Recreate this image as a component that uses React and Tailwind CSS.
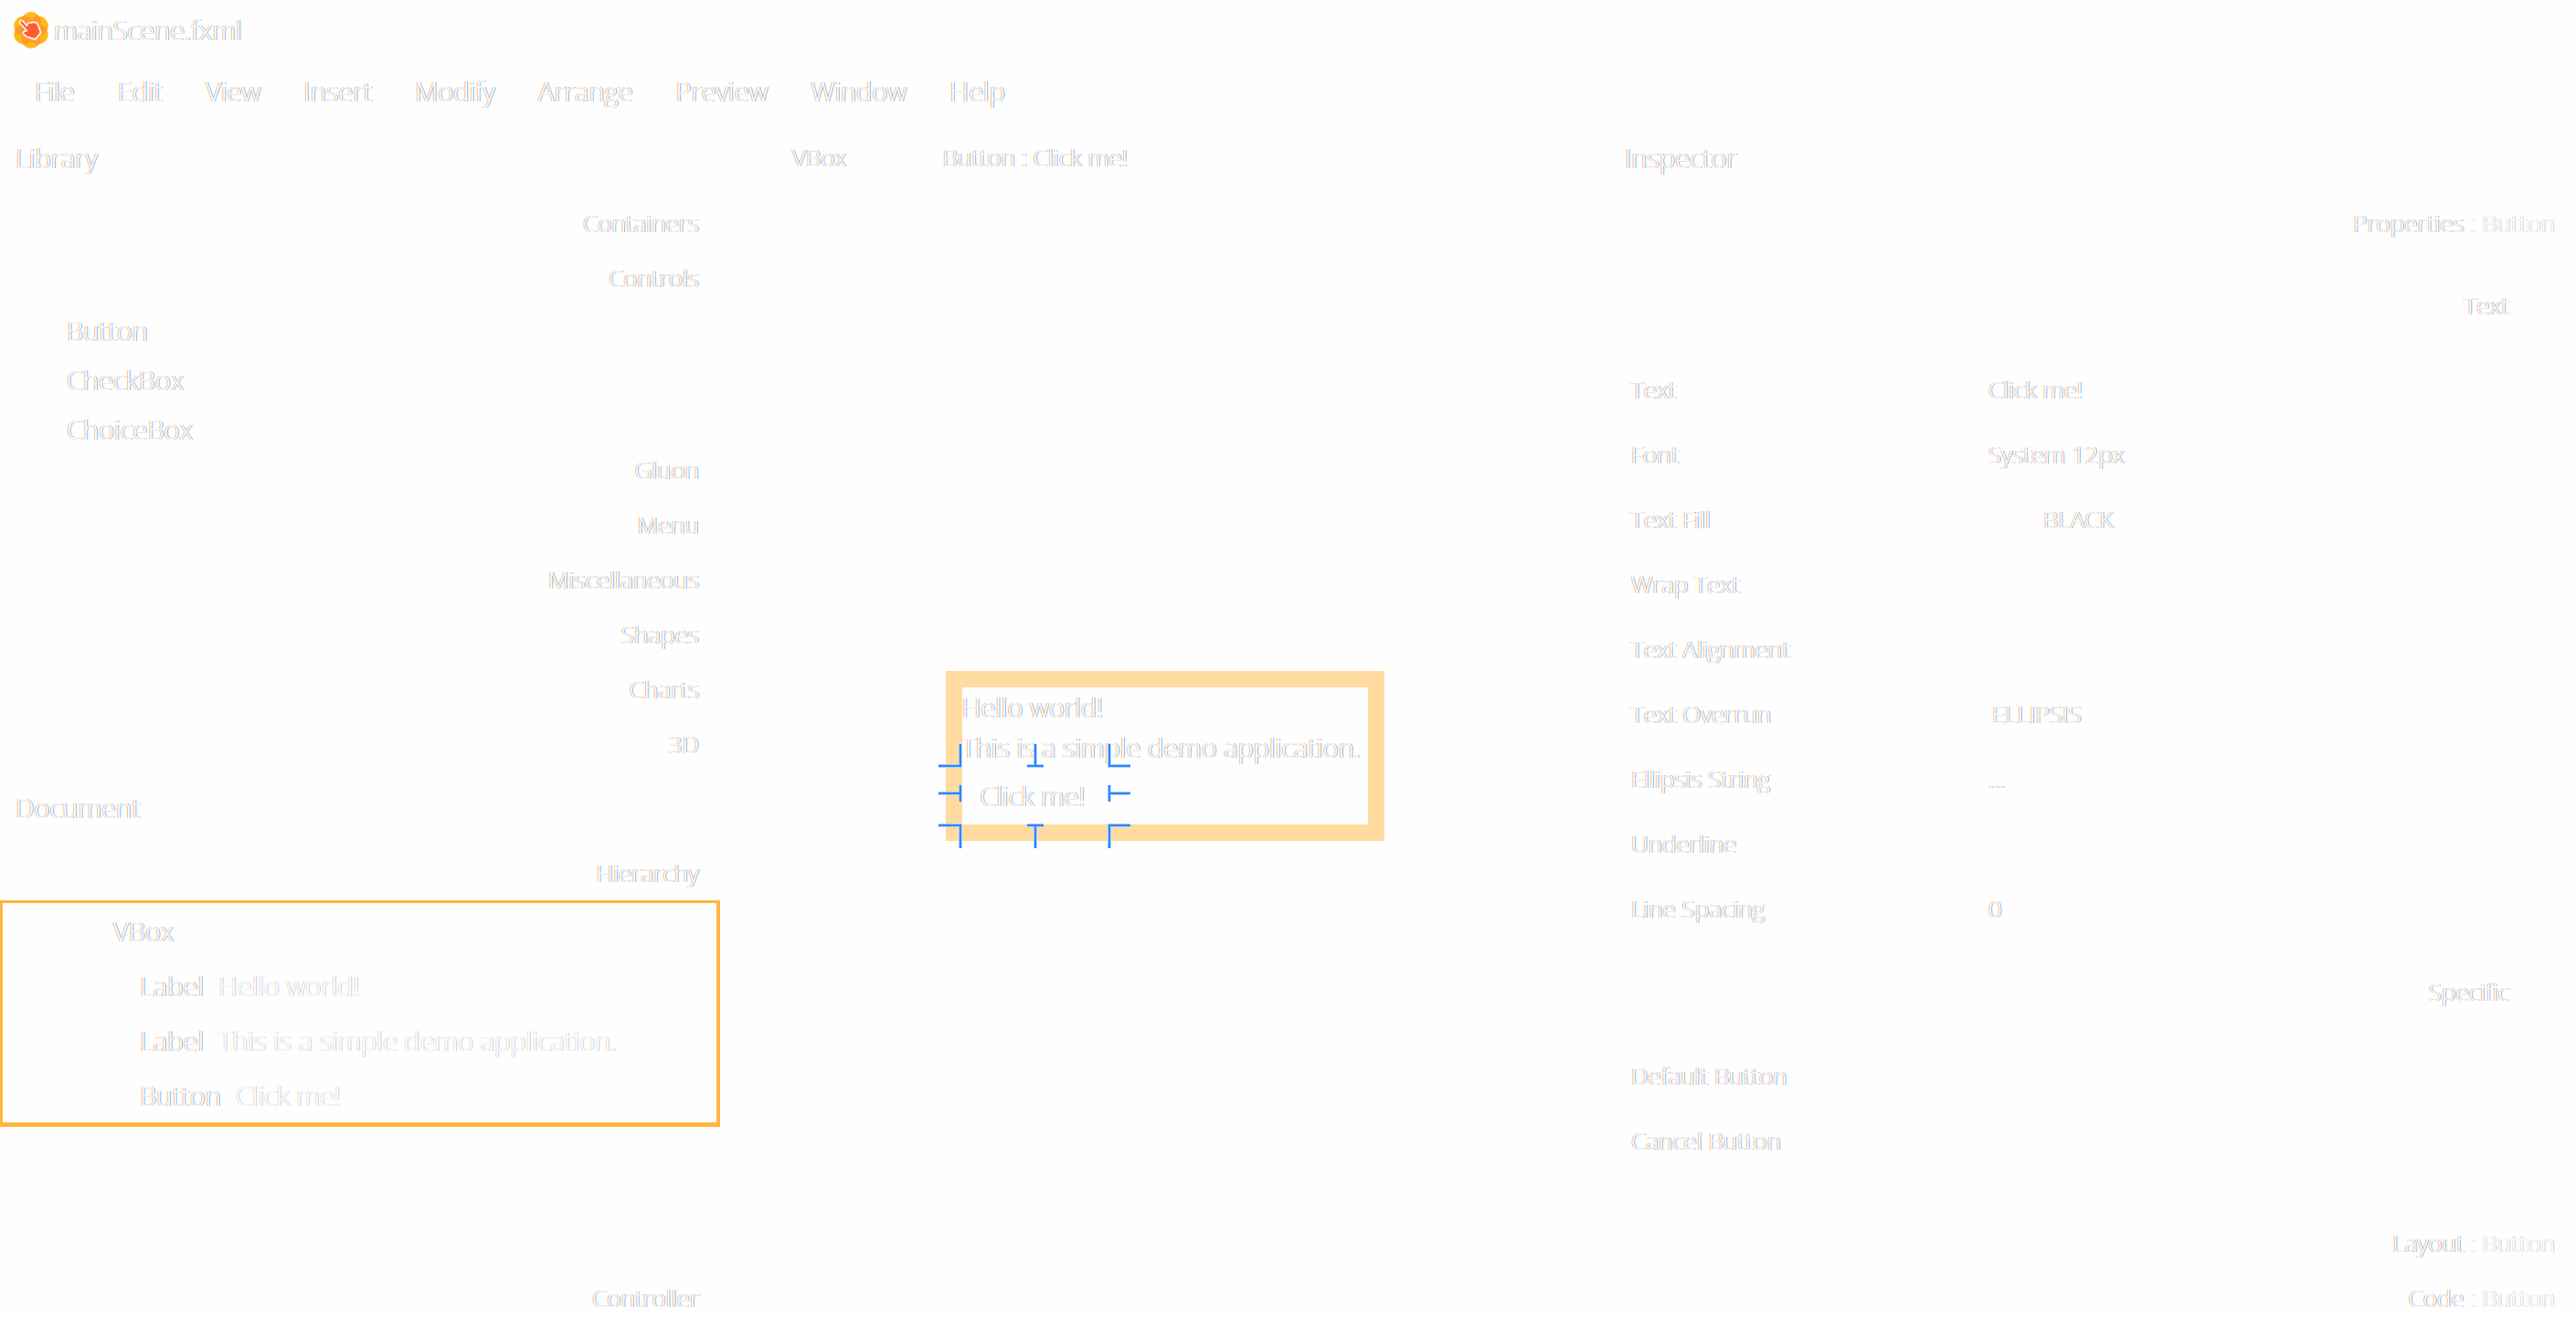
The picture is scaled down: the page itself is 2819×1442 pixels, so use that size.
const fringe =
  "text-[#fefefe] [text-shadow:-1px_0_0_#ffb874,1px_0_0_#74b8ff]";
const paleFringe =
  "text-[#fefefe] [text-shadow:-1px_0_0_#ffdab4,1px_0_0_#aed4ff]";

const menus = ["File", "Edit", "View", "Insert", "Modify", "Arrange", "Preview", "Window", "Help"];
const controls = ["Button", "CheckBox", "ChoiceBox"];
const lowerSections = ["Gluon", "Menu", "Miscellaneous", "Shapes", "Charts", "3D"];
const tree = [
  { type: "Label", text: "Hello world!" },
  { type: "Label", text: "This is a simple demo application." },
  { type: "Button", text: "Click me!" },
];

function Logo() {
  const petals = [0, 60, 120, 180, 240, 300];
  return (
    <svg className="h-10 w-10 shrink-0" viewBox="0 0 40 40" aria-hidden="true">
      {petals.map((a) => (
        <circle key={a} cx="20" cy="10.500" r="10.500" fill="#ffb81c" transform={`rotate(${a} 20 20)`} />
      ))}
      {petals.map((a) => (
        <ellipse key={a} cx="20" cy="12" rx="5.800" ry="9.500" fill="#ff9a2c" transform={`rotate(${a + 30} 20 20)`} />
      ))}
      <circle cx="20" cy="20" r="10" fill="#ff8a30" />
      <path
        d="M7.800 12.500C7 10.200 9.200 8.600 11 10l4.300 5 1.200-2.400c1-1.500 2.800-1.200 3.400-.4.900-1.500 2.600-1.200 3.200-.3 1.200-1 2.800-.7 3.200.4l1.500 2.400 2.500 7-.2 2-5.500 6.500-9.800-3-3.600-3.500 1-2.600 3.200-.6z"
        fill="#ff5c33"
        stroke="#fff0e6"
        strokeWidth="1.800"
        strokeLinejoin="round"
      />
    </svg>
  );
}

function SectionRow({ children }) {
  return (
    <button type="button" className={`flex h-[60px] w-full items-center justify-end pr-[23px] text-[26px] ${fringe}`}>
      {children}
    </button>
  );
}

function PanelTitle({ children }) {
  return <h2 className={`mb-[3px] flex h-[78px] items-center pl-[17px] text-[29px] font-light ${fringe}`}>{children}</h2>;
}

const handlePath =
  "M0 24H24V0M106 0V24M97 24H115M187 0V24H210M0 54H24M24 45V63M187 45V63M187 54H210M0 89H24V114M106 114V89M97 89H115M187 114V89H210";

function ResizeHandles() {
  return (
    <svg
      className="pointer-events-none absolute -top-[26px] -left-[26px] h-[114px] w-[210px]"
      viewBox="0 0 210 114"
      fill="none"
      aria-hidden="true"
    >
      <path d={handlePath} stroke="#a8d0ff" strokeWidth="4" />
      <path d={handlePath} stroke="#2f84ff" strokeWidth="2" />
    </svg>
  );
}

function Field({ id, label, children }) {
  return (
    <div className="grid h-[71px] grid-cols-[391fr_643fr] items-center pl-6">
      <label htmlFor={id} className={fringe}>
        {label}
      </label>
      {children}
    </div>
  );
}

function TextValue({ id, value }) {
  return <input id={id} defaultValue={value} className={`w-full bg-transparent outline-none ${fringe}`} />;
}

function InspectorHeader({ children }) {
  return (
    <button type="button" className="flex w-full items-center justify-end pr-[23px] text-[26px]">
      <span className={fringe}>{children}</span>
      <span className={`whitespace-pre ${paleFringe}`}> : Button</span>
    </button>
  );
}

export default function App() {
  return (
    <div className="flex min-h-screen flex-col bg-[#fefefe] font-['Open_Sans',sans-serif] leading-none font-light">
      <header className="flex h-[65px] items-center gap-[5px] pl-[14px]">
        <Logo />
        <h1 className={`text-[29px] font-light ${fringe}`}>mainScene.fxml</h1>
      </header>

      <nav className="flex h-[68px] items-center gap-[47px] pl-[38px]">
        {menus.map((m) => (
          <button key={m} type="button" className={`text-[29px] ${fringe}`}>
            {m}
          </button>
        ))}
      </nav>

      <main className="grid grow grid-cols-[788fr_973fr_1058fr]">
        <aside className="flex flex-col">
          <PanelTitle>Library</PanelTitle>
          <SectionRow>Containers</SectionRow>
          <SectionRow>Controls</SectionRow>
          <ul className="h-[150px] pl-[73px]">
            {controls.map((c) => (
              <li key={c} className={`flex h-[54px] items-center text-[29px] ${fringe}`}>
                {c}
              </li>
            ))}
          </ul>
          {lowerSections.map((s) => (
            <SectionRow key={s}>{s}</SectionRow>
          ))}

          <PanelTitle>Document</PanelTitle>
          <SectionRow>Hierarchy</SectionRow>
          <ul className="border-t-3 border-r-4 border-b-5 border-l-3 border-[#ffb640] text-[29px]">
            <li className={`flex h-[60px] items-center pl-[121px] ${fringe}`}>VBox</li>
            {tree.map((n) => (
              <li key={n.text} className="flex h-[60px] items-center gap-4 pl-[150px] whitespace-nowrap">
                <span className={fringe}>{n.type}</span>
                <span className={paleFringe}>{n.text}</span>
              </li>
            ))}
          </ul>
          <button
            type="button"
            className={`mt-auto flex h-11 w-full items-center justify-end pr-[23px] text-[26px] ${fringe}`}
          >
            Controller
          </button>
        </aside>

        <section className="flex flex-col">
          <nav className="flex h-[78px] items-center gap-[105px] pl-[79px] text-[26px]">
            <button type="button" className={fringe}>
              VBox
            </button>
            <button type="button" className={fringe}>
              Button : Click me!
            </button>
          </nav>
          <div className="flex grow items-center justify-center">
            <div className="min-w-[480px] border-[18px] border-[#ffdba0] text-[29px] whitespace-nowrap">
              <p className={`flex h-11 items-center ${fringe}`}>Hello world!</p>
              <p className={`flex h-11 items-center ${fringe}`}>This is a simple demo application.</p>
              <div className="relative w-fit">
                <button type="button" className={`h-[62px] px-5 ${fringe}`}>
                  Click me!
                </button>
                <ResizeHandles />
              </div>
            </div>
          </div>
        </section>

        <aside className="flex flex-col text-[26px]">
          <PanelTitle>Inspector</PanelTitle>
          <div className="flex h-[60px]">
            <InspectorHeader>Properties</InspectorHeader>
          </div>
          <h3 className={`mt-1 flex h-28 items-center justify-end pr-[73px] ${fringe}`}>Text</h3>
          <Field id="text" label="Text">
            <TextValue id="text" value="Click me!" />
          </Field>
          <Field id="font" label="Font">
            <button id="font" type="button" className={`text-left ${fringe}`}>
              System 12px
            </button>
          </Field>
          <Field id="fill" label="Text Fill">
            <button id="fill" type="button" className={`pl-[60px] text-left ${fringe}`}>
              BLACK
            </button>
          </Field>
          <Field label="Wrap Text" />
          <Field label="Text Alignment" />
          <Field id="overrun" label="Text Overrun">
            <select id="overrun" className={`w-full appearance-none bg-transparent pl-1 outline-none ${fringe}`}>
              <option>ELLIPSIS</option>
            </select>
          </Field>
          <Field id="ellipsis" label="Ellipsis String">
            <TextValue id="ellipsis" value="..." />
          </Field>
          <Field label="Underline" />
          <Field id="spacing" label="Line Spacing">
            <TextValue id="spacing" value="0" />
          </Field>
          <h3 className={`flex h-28 items-center justify-end pr-[73px] ${fringe}`}>Specific</h3>
          <Field label="Default Button" />
          <Field label="Cancel Button" />
          <div className="mt-auto grid auto-rows-[44px] gap-4">
            <InspectorHeader>Layout</InspectorHeader>
            <InspectorHeader>Code</InspectorHeader>
          </div>
        </aside>
      </main>
    </div>
  );
}
